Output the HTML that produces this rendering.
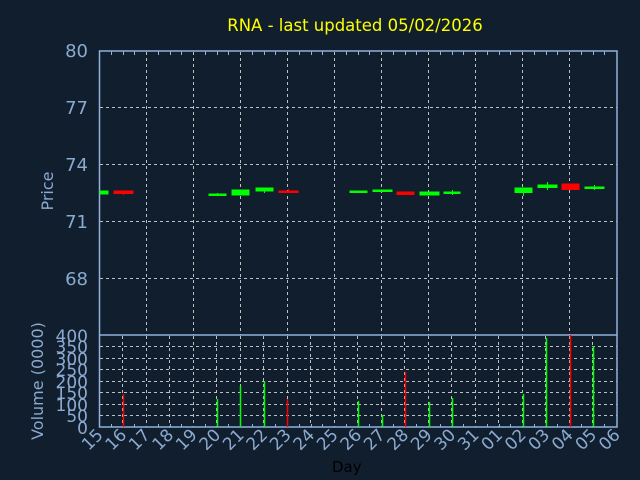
<!DOCTYPE html>
<html><head><meta charset="utf-8"><style>
html,body{margin:0;padding:0;background:#111e2e;}
svg{display:block;font-family:"DejaVu Sans","Liberation Sans",sans-serif;}
</style></head><body>
<svg width="640" height="480" viewBox="0 0 640 480" xmlns="http://www.w3.org/2000/svg">
<rect width="640" height="480" fill="#111e2e"/>
<text x="355" y="31" fill="#ffff00" font-size="16.5" text-anchor="middle">RNA - last updated 05/02/2026</text>
<g stroke="#bfbfbf" stroke-width="1" stroke-dasharray="3,3" fill="none">
<path d="M100 107.5H617M100 164.5H617M100 221.5H617M100 278.5H617"/>
<path d="M146.5 52V335M193.5 52V335M240.5 52V335M287.5 52V335M334.5 52V335M381.5 52V335M428.5 52V335M475.5 52V335M522.5 52V335M569.5 52V335"/>
<path d="M100 346.5H617M100 358.5H617M100 369.5H617M100 381.5H617M100 392.5H617M100 404.5H617M100 415.5H617"/>
<path d="M122.5 336V427M146.5 336V427M169.5 336V427M193.5 336V427M216.5 336V427M240.5 336V427M263.5 336V427M287.5 336V427M310.5 336V427M334.5 336V427M357.5 336V427M381.5 336V427M404.5 336V427M428.5 336V427M451.5 336V427M475.5 336V427M498.5 336V427M522.5 336V427M545.5 336V427M569.5 336V427M592.5 336V427"/>
</g>
<g stroke="#8fb2dc" stroke-width="1.5" fill="none">
<path d="M99.5 335V51H617V335"/>
<rect x="99.5" y="335" width="517.5" height="92"/>
</g>
<g stroke="#8fb2dc" stroke-width="1" fill="none">
<path d="M111.5 51v4M123.5 51v4M134.5 51v4M158.5 51v4M170.5 51v4M181.5 51v4M205.5 51v4M217.5 51v4M228.5 51v4M252.5 51v4M264.5 51v4M275.5 51v4M299.5 51v4M311.5 51v4M322.5 51v4M346.5 51v4M358.5 51v4M369.5 51v4M393.5 51v4M405.5 51v4M416.5 51v4M440.5 51v4M452.5 51v4M463.5 51v4M487.5 51v4M499.5 51v4M510.5 51v4M534.5 51v4M546.5 51v4M557.5 51v4M581.5 51v4M593.5 51v4M604.5 51v4"/>
<path d="M111.5 427v-3M123.5 427v-3M134.5 427v-3M158.5 427v-3M170.5 427v-3M181.5 427v-3M205.5 427v-3M217.5 427v-3M228.5 427v-3M252.5 427v-3M264.5 427v-3M275.5 427v-3M299.5 427v-3M311.5 427v-3M322.5 427v-3M346.5 427v-3M358.5 427v-3M369.5 427v-3M393.5 427v-3M405.5 427v-3M416.5 427v-3M440.5 427v-3M452.5 427v-3M463.5 427v-3M487.5 427v-3M499.5 427v-3M510.5 427v-3M534.5 427v-3M546.5 427v-3M557.5 427v-3M581.5 427v-3M593.5 427v-3M604.5 427v-3"/>
</g>
<g fill="#8aaad0" font-size="18" text-anchor="end">
<text x="88" y="57">80</text><text x="88" y="114">77</text><text x="88" y="171">74</text><text x="88" y="228">71</text><text x="88" y="285">68</text>
</g>
<g fill="#8aaad0" font-size="17" text-anchor="end">
<text x="88" y="342">400</text><text x="88" y="353">350</text><text x="88" y="365">300</text><text x="88" y="376">250</text><text x="88" y="388">200</text><text x="88" y="399">150</text><text x="88" y="411">100</text><text x="88" y="422">50</text><text x="88" y="434">0</text>
</g>
<text transform="translate(53,191) rotate(-90)" fill="#8aaad0" font-size="16" text-anchor="middle">Price</text>
<text transform="translate(43,381) rotate(-90)" fill="#8aaad0" font-size="16" text-anchor="middle">Volume (0000)</text>
<text x="332" y="472" fill="#000" font-size="15">Day</text>
<g fill="#8aaad0" font-size="17" text-anchor="end">
<text transform="translate(104,436) rotate(-45)">15</text>
<text transform="translate(127.5,436) rotate(-45)">16</text>
<text transform="translate(151,436) rotate(-45)">17</text>
<text transform="translate(174.5,436) rotate(-45)">18</text>
<text transform="translate(198,436) rotate(-45)">19</text>
<text transform="translate(221.5,436) rotate(-45)">20</text>
<text transform="translate(245,436) rotate(-45)">21</text>
<text transform="translate(268.5,436) rotate(-45)">22</text>
<text transform="translate(292,436) rotate(-45)">23</text>
<text transform="translate(315.5,436) rotate(-45)">24</text>
<text transform="translate(339,436) rotate(-45)">25</text>
<text transform="translate(362.5,436) rotate(-45)">26</text>
<text transform="translate(386,436) rotate(-45)">27</text>
<text transform="translate(409.5,436) rotate(-45)">28</text>
<text transform="translate(433,436) rotate(-45)">29</text>
<text transform="translate(456.5,436) rotate(-45)">30</text>
<text transform="translate(480,436) rotate(-45)">31</text>
<text transform="translate(503.5,436) rotate(-45)">01</text>
<text transform="translate(527,436) rotate(-45)">02</text>
<text transform="translate(550.5,436) rotate(-45)">03</text>
<text transform="translate(574,436) rotate(-45)">04</text>
<text transform="translate(597.5,436) rotate(-45)">05</text>
<text transform="translate(621,436) rotate(-45)">06</text>
</g>
<g fill="#00ff00" stroke="#00ff00" stroke-width="1">
<rect x="100" y="191" width="8" height="3"/>
<rect x="209" y="194" width="17" height="1.5"/><path d="M217.5 193V195" fill="none"/>
<rect x="232" y="190" width="17" height="5"/>
<rect x="256" y="188" width="17" height="3"/><path d="M264.5 191V193" fill="none"/>
<rect x="350" y="191" width="17" height="1.5"/>
<rect x="373" y="190" width="19" height="1.5"/>
<rect x="420" y="192" width="19" height="3"/>
<rect x="444" y="192" width="16" height="1.5"/><path d="M452.5 190V195" fill="none"/>
<rect x="515" y="188" width="17" height="4.5"/><path d="M523.5 192V196" fill="none"/>
<rect x="538" y="185" width="19" height="2.5"/><path d="M547.5 182V190" fill="none"/>
<rect x="585" y="187" width="19" height="1.5"/><path d="M594.5 185V190" fill="none"/>
</g>
<g fill="#ff0000" stroke="#ff0000" stroke-width="1">
<rect x="114" y="191" width="19" height="2.5"/><path d="M123.5 193V195" fill="none"/>
<rect x="279" y="191" width="19" height="1.5"/><path d="M288.5 189V191" fill="none"/>
<rect x="397" y="192" width="17" height="2.5"/>
<rect x="562" y="184" width="17" height="5.5"/>
</g>
<g stroke-width="1.5">
<path stroke="#ff0000" d="M123.5 394V427M287.5 399V427M405.5 372V427M570.5 335V427"/>
<path stroke="#00ff00" d="M217.5 399V427M240.5 386V427M264.5 381V427M358.5 401V427M382.5 415V427M429.5 402V427M452.5 398V427M523.5 394V427M546.5 338V427M593.5 346V427"/>
</g>
</svg>
</body></html>
